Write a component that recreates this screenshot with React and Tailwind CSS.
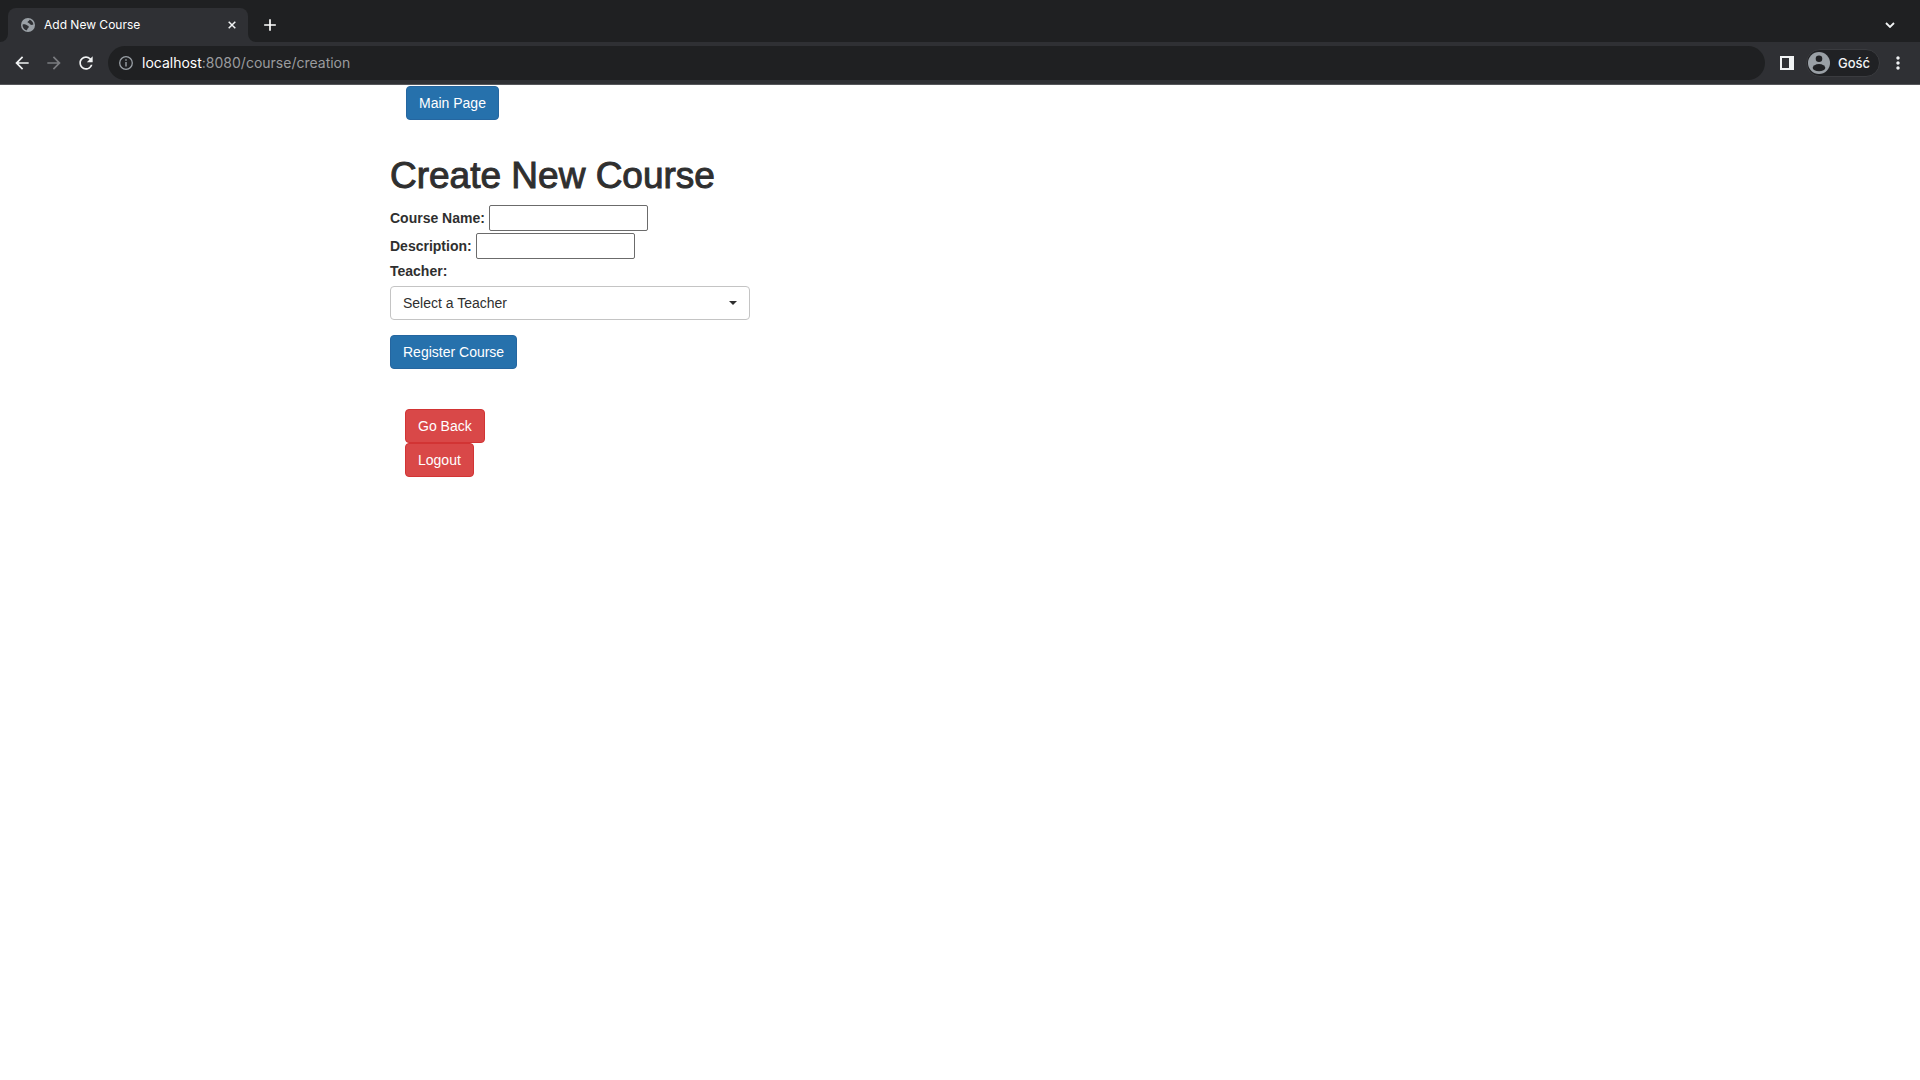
import { MdArrowBack, MdArrowForward, MdRefresh, MdAdd, MdMoreVert } from "react-icons/md";

function GlobeIcon() {
  return (
    <svg viewBox="0 0 14 14" className="size-[14px] shrink-0" aria-hidden="true">
      <circle cx="7" cy="7" r="7" fill="#9aa0a6" />
      <path
        d="M1.6 6.4 C3.200 6.200 4.800 6.200 5.600 7.100 C6.400 8 8 7.600 7.800 9.100 C7.600 10.300 6.300 10.200 6 12.300 C3.400 11.900 1.400 9.500 1.600 6.400 Z M8.300 1.800 C8.700 3 6.700 3.200 6.500 4.100 C6.400 5.200 8.200 4.700 8.700 5.800 C9.100 6.900 10.500 7.200 12.400 6.600 C12.200 4.200 10.500 2.300 8.300 1.800 Z"
        fill="#2f3034"
      />
    </svg>
  );
}

function CloseIcon() {
  return (
    <svg viewBox="0 0 8 8" className="size-2" aria-hidden="true">
      <path d="M0.700 0.700l6.600 6.600M7.300 0.700L0.700 7.300" stroke="#f1f3f4" strokeWidth="1.500" />
    </svg>
  );
}

function InfoIcon() {
  return (
    <svg viewBox="0 0 14 14" className="size-[14px] shrink-0" aria-hidden="true">
      <circle cx="7" cy="7" r="6.300" fill="none" stroke="#9aa0a6" strokeWidth="1.300" />
      <path d="M6.300 3.300h1.400v1.400H6.300zM6.300 6h1.400v4.500H6.300z" fill="#9aa0a6" />
    </svg>
  );
}

function SidePanelIcon() {
  return (
    <svg viewBox="0 0 14 14" className="size-[14px]" aria-hidden="true">
      <path d="M0 0h14v14H0zM2 2v10h7V2z" fill="#f1f3f4" fillRule="evenodd" />
    </svg>
  );
}

function GuestIcon() {
  return (
    <svg viewBox="0 0 22 22" className="size-[22px]" aria-hidden="true">
      <circle cx="11" cy="11" r="11" fill="#9aa0a6" />
      <circle cx="11" cy="6.700" r="3.300" fill="#202124" />
      <ellipse cx="11" cy="15.700" rx="6.300" ry="3.600" fill="#202124" />
    </svg>
  );
}

function TabStrip() {
  return (
    <div className="flex h-[42px] items-end bg-[#1f2022] px-2">
      <div className="relative flex h-[34px] w-[240px] items-center rounded-t-lg bg-[#2f3034] pr-3 pl-[13px] text-white">
        <svg viewBox="0 0 8 8" className="absolute bottom-0 -left-2 size-2" aria-hidden="true">
          <path d="M8 0v8H0a8 8 0 0 0 8-8z" fill="#2f3034" />
        </svg>
        <svg viewBox="0 0 8 8" className="absolute -right-2 bottom-0 size-2" aria-hidden="true">
          <path d="M0 0v8h8a8 8 0 0 1-8-8z" fill="#2f3034" />
        </svg>
        <GlobeIcon />
        <span className="ml-[9px] flex-1 text-[12px]">Add New Course</span>
        <button type="button" aria-label="Close tab">
          <CloseIcon />
        </button>
      </div>
      <button type="button" aria-label="New tab" className="ml-3 flex h-[34px] w-5 items-center justify-center text-white">
        <MdAdd size={20} />
      </button>
      <button type="button" aria-label="Search tabs" className="mr-4 ml-auto flex h-[34px] w-3 items-center justify-center">
        <svg viewBox="0 0 10 6" className="h-[6px] w-[10px]" aria-hidden="true">
          <path d="M1 1l4 4 4-4" fill="none" stroke="#f1f3f4" strokeWidth="1.800" />
        </svg>
      </button>
    </div>
  );
}

function Toolbar() {
  return (
    <div className="flex h-[43px] items-center border-b border-[#55565a] bg-[#2f3034] px-3">
      <button type="button" aria-label="Back" className="text-[#f1f3f4]">
        <MdArrowBack size={20} />
      </button>
      <button type="button" aria-label="Forward" className="ml-3 text-[#7b7c80]">
        <MdArrowForward size={20} />
      </button>
      <button type="button" aria-label="Reload" className="ml-3 text-[#f1f3f4]">
        <MdRefresh size={20} />
      </button>
      <div className="ml-3 flex h-[34px] flex-1 items-center rounded-full bg-[#1f2022] pl-[11px]">
        <InfoIcon />
        <span className="ml-[9px] text-[14px] leading-5 text-[#9a9b9e]">
          <span className="text-white">localhost</span>:8080/course/creation
        </span>
      </div>
      <button type="button" aria-label="Side panel" className="ml-[15px]">
        <SidePanelIcon />
      </button>
      <button
        type="button"
        className="ml-3 flex h-7 items-center gap-2 rounded-full border border-[#3a3b3f] bg-[#202124] pr-[9px] pl-[1px] text-[13px] leading-5 font-medium text-[#f1f3f4]"
      >
        <GuestIcon />
        Gość
      </button>
      <button type="button" aria-label="Menu" className="ml-2 text-[#f1f3f4]">
        <MdMoreVert size={20} />
      </button>
    </div>
  );
}

const buttonBase = "block rounded border px-3 py-[6px] text-[14px] leading-5 text-white";
const primary = "border-[#2566a0] bg-[#2671ac]";
const danger = "border-[#d23434] bg-[#d94848]";
const inputStyle = "h-[26px] w-[159px] rounded-[2px] border border-[#6b6b6b] bg-white px-1";

export default function App() {
  return (
    <div className="min-h-screen bg-white">
      <header className="font-['Inter',sans-serif]">
        <TabStrip />
        <Toolbar />
      </header>
      <main className="mx-auto max-w-[1170px] px-[15px] pt-[1px] font-['Liberation_Sans',sans-serif] text-[14px] leading-5 text-[#2f2f2f]">
        <nav className="px-4">
          <button type="button" className={`${buttonBase} ${primary}`}>Main Page</button>
        </nav>
        <form className="mt-9" onSubmit={(e) => e.preventDefault()}>
          <h1 className="text-[37px] leading-10 font-normal [-webkit-text-stroke:1px_#2f2f2f]">Create New Course</h1>
          <div className="mt-2 flex h-7 items-center gap-1">
            <label htmlFor="name" className="font-bold">Course Name:</label>
            <input id="name" type="text" className={inputStyle} />
          </div>
          <div className="flex h-7 items-center gap-1">
            <label htmlFor="description" className="font-bold">Description:</label>
            <input id="description" type="text" className={inputStyle} />
          </div>
          <label htmlFor="teacher" className="mt-[1px] mb-[5px] block font-bold">Teacher:</label>
          <div className="relative max-w-[360px]">
            <select
              id="teacher"
              className="block h-[34px] w-full appearance-none rounded border border-[#c4c4c4] bg-white px-3 text-[14px]"
            >
              <option>Select a Teacher</option>
            </select>
            <svg viewBox="0 0 8 4" className="pointer-events-none absolute top-[15px] right-[13px] h-1 w-2" aria-hidden="true">
              <path d="M0 0h8L4 4z" fill="#2f2f2f" />
            </svg>
          </div>
          <button type="submit" className={`${buttonBase} ${primary} mt-[15px]`}>Register Course</button>
        </form>
        <div className="mt-10 px-[15px]">
          <button type="button" className={`${buttonBase} ${danger}`}>Go Back</button>
          <button type="button" className={`${buttonBase} ${danger}`}>Logout</button>
        </div>
      </main>
    </div>
  );
}
